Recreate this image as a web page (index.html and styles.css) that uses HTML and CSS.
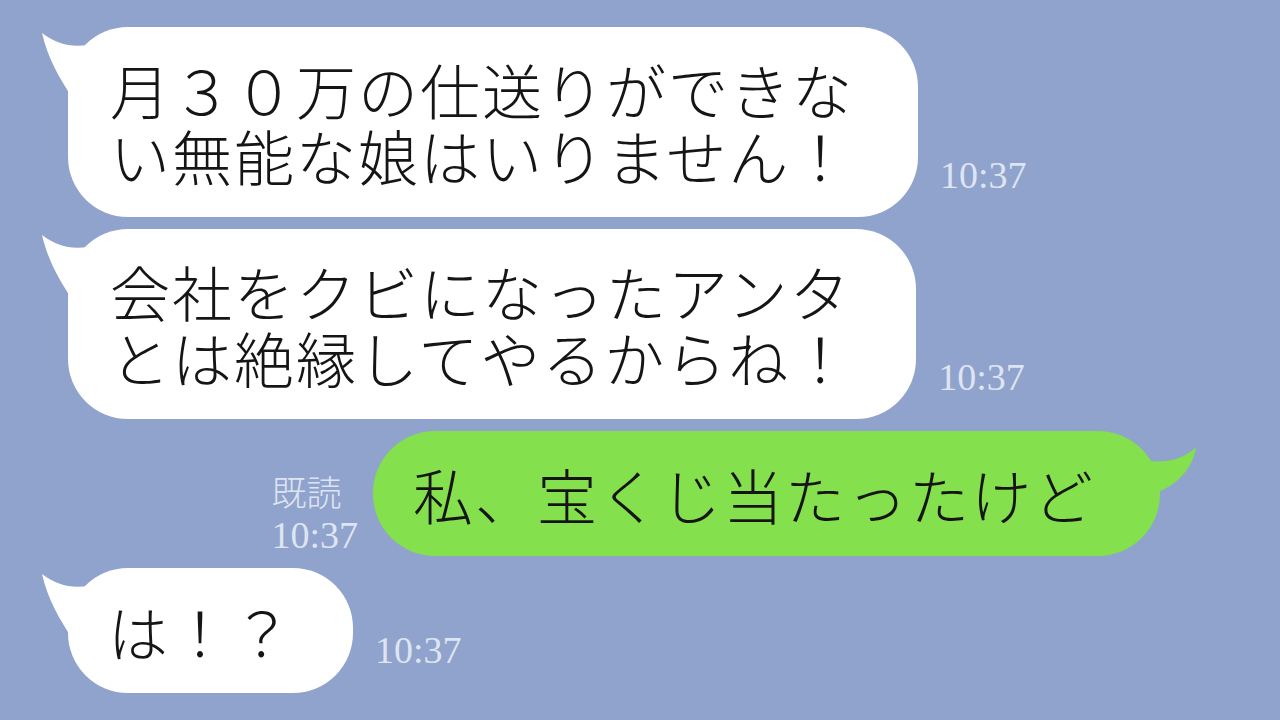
FILE: index.html
```html
<!DOCTYPE html>
<html lang="ja">
<head>
    <meta charset="UTF-8">
    <meta name="viewport" content="width=device-width, initial-scale=1.0">
    <title>トーク</title>
    <link rel="stylesheet" href="styles.css">
</head>
<body>
    <div class="chat">
        <!-- 相手のメッセージ -->
        <div class="row left">
            <div class="bubble white">
                <svg class="tail tail-left" viewBox="-30 0 70 80" width="70" height="80"><path d="M34 14 C12 22 -8 20 -26 6 C-20 32 -8 52 4 70 L40 70 Z"/></svg>
                <p class="line">月３０万の仕送りができな</p>
                <p class="line">い無能な娘はいりません！</p>
            </div>
            <div class="time">10:37</div>
        </div>

        <div class="row left">
            <div class="bubble white">
                <svg class="tail tail-left" viewBox="-30 0 70 80" width="70" height="80"><path d="M34 14 C12 22 -8 20 -26 6 C-20 32 -8 52 4 70 L40 70 Z"/></svg>
                <p class="line">会社をクビになったアンタ</p>
                <p class="line">とは絶縁してやるからね！</p>
            </div>
            <div class="time">10:37</div>
        </div>

        <!-- 自分のメッセージ -->
        <div class="row right">
            <div class="meta">
                <div class="read">既読</div>
                <div>10:37</div>
            </div>
            <div class="bubble green">
                <svg class="tail tail-right" viewBox="-40 0 80 80" width="80" height="80"><path d="M-12 30 C8 32 24 28 36 16 C34 34 20 52 0 60 L-40 60 Z"/></svg>
                <p class="line">私、宝くじ当たったけど</p>
            </div>
        </div>

        <div class="row left">
            <div class="bubble white short">
                <svg class="tail tail-left" viewBox="-30 0 70 80" width="70" height="80"><path d="M34 14 C12 22 -8 20 -26 6 C-20 32 -8 52 4 70 L40 70 Z"/></svg>
                <p class="line">は！？</p>
            </div>
            <div class="time last">10:37</div>
        </div>
    </div>
</body>
</html>
```

FILE: styles.css
```css
/* 全体 */
body {
    margin: 0;
    background-color: #8fa3cc;
    font-family: "Noto Sans CJK JP", sans-serif;
    overflow: hidden;
}

.chat {
    display: flex;
    flex-direction: column;
    gap: 12px;
    padding-top: 27px;
}

/* 行 */
.row {
    display: flex;
    align-items: flex-end;
}
.left { padding-left: 68px; }
.right {
    justify-content: flex-end;
    padding-right: 120px;
}

/* 吹き出し */
.bubble {
    position: relative;
    font-size: 60px;
    font-weight: 300;
    color: #151515;
    padding: 29px 64px 29px 42px;
    border-radius: 60px;
}
.line {
    margin: 0;
    height: 66px;
    line-height: 66px;
    letter-spacing: 2px;
    white-space: nowrap;
}
.white { background-color: #ffffff; }
.white .tail path { fill: #ffffff; }
.green {
    background-color: #84e04c;
    padding: 30px 65px 29px 40px;
    border-radius: 62px;
}
.green .tail path { fill: #84e04c; }
.short { padding: 30px 59px 29px 40px; }

/* しっぽ */
.tail {
    position: absolute;
    top: 0;
}
.tail-left { left: -30px; }
.tail-right { right: -40px; }

/* 時刻と既読 */
.time, .meta {
    font-family: "Liberation Serif", "Noto Sans CJK JP", serif;
    font-size: 38px;
    line-height: 38px;
    color: #e9eef8;
    opacity: 0.88;
}
.time {
    margin-left: 22px;
    margin-bottom: 23px;
}
.time.last { margin-bottom: 24px; }
.meta {
    margin-right: 15px;
    margin-bottom: 2px;
}
.read {
    font-size: 35px;
    line-height: 42px;
    font-weight: 300;
}
```
